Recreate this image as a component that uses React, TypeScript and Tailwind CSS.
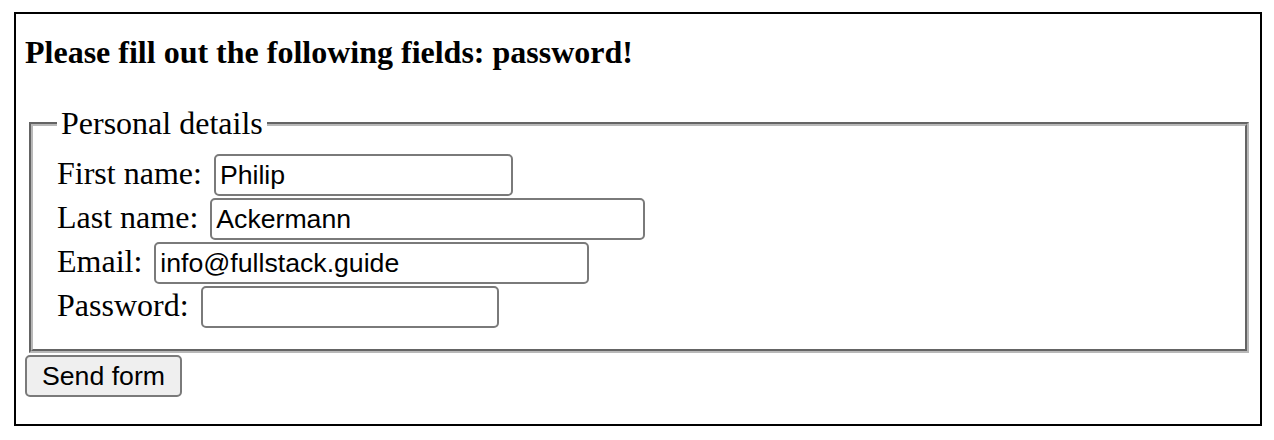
import { useState } from "react";

type Field = {
  id: string;
  label: string;
  type: string;
  value: string;
  width: string;
};

const fields: Field[] = [
  { id: "firstname", label: "First name:", type: "text", value: "Philip", width: "w-[299px]" },
  { id: "lastname", label: "Last name:", type: "text", value: "Ackermann", width: "w-[435px]" },
  { id: "email", label: "Email:", type: "email", value: "info@fullstack.guide", width: "w-[435px]" },
  { id: "password", label: "Password:", type: "password", value: "", width: "w-[298px]" },
];

export default function App() {
  const [values, setValues] = useState<Record<string, string>>(
    Object.fromEntries(fields.map((f) => [f.id, f.value])),
  );

  return (
    <div className="min-h-[440px] bg-white pt-[12px] pl-[14px] font-['Liberation_Serif',serif] text-[32px] text-black">
      <form
        className="h-[414px] w-[1248px] border-2 border-black pt-[20px] pr-[7px] pb-[27px] pl-[9px]"
        onSubmit={(e) => e.preventDefault()}
      >
        <p className="mb-[34px] text-[32px] leading-[37px] font-bold">
          Please fill out the following fields: password!
        </p>

        <fieldset className="mx-[4px] border-4 border-[#b8b8b8] px-[24px] pt-[12px] pb-[19px] [border-style:groove]">
          <legend className="px-[4px] leading-[37px]">Personal details</legend>
          {fields.map((field) => (
            <div key={field.id} className="flex h-[44px] items-baseline gap-[12px]">
              <label htmlFor={field.id} className="leading-[37px]">
                {field.label}
              </label>
              <input
                id={field.id}
                type={field.type}
                value={values[field.id]}
                onChange={(e) =>
                  setValues({ ...values, [field.id]: e.target.value })
                }
                className={`${field.width} h-[42px] rounded-[5px] border-2 border-[#7a7a7a] bg-white px-[4px] font-['Liberation_Sans',Arial,sans-serif] text-[26.67px] text-black outline-none`}
              />
            </div>
          ))}
        </fieldset>

        <button
          type="submit"
          className="mt-[2px] block h-[42px] w-[157px] rounded-[5px] border-2 border-[#7a7a7a] bg-[#efefef] font-['Liberation_Sans',Arial,sans-serif] text-[26.67px] leading-none text-black"
        >
          Send form
        </button>
      </form>
    </div>
  );
}
